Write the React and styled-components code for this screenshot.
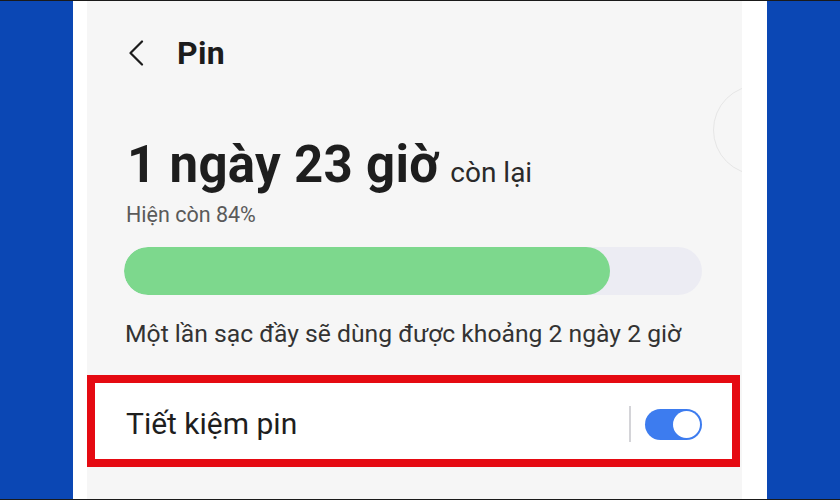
import styled, { createGlobalStyle } from 'styled-components';

const GlobalStyle = createGlobalStyle`
  * { box-sizing: border-box; }
  body {
    margin: 0;
    background: #ffffff;
    font-family: Roboto, "Noto Sans", Arial, sans-serif;
  }
`;

// Styles
const Page = styled.div`
  width: 840px;
  height: 500px;
  display: flex;
  border-top: 1px solid #1a1a1a;
  border-bottom: 1px solid #1a1a1a;
  overflow: hidden;
`;

const Side = styled.div`
  width: ${(p) => p.$width}px;
  flex-shrink: 0;
  background: #0b47b4;
`;

const Phone = styled.div`
  flex: 1;
  background: #ffffff;
  padding: 0 25px 0 14px;
  display: flex;
`;

const Screen = styled.div`
  position: relative;
  flex: 1;
  background: #f6f6f6;
  overflow: hidden;
`;

const EdgeRing = styled.div`
  position: absolute;
  left: 626px;
  top: 84px;
  width: 90px;
  height: 90px;
  border-radius: 50%;
  border: 1.5px solid #e6e6e6;
`;

const Header = styled.div`
  display: flex;
  align-items: center;
  gap: 33px;
  padding: 34px 0 0 41px;
  height: 70px;
  color: #1c1c1c;
`;

const Title = styled.h1`
  margin: 0;
  font-size: 32px;
  line-height: 36px;
  font-weight: 700;
  letter-spacing: 0.3px;
`;

const Content = styled.div`
  padding: 0 40px 0 37px;
`;

const Remaining = styled.div`
  display: flex;
  align-items: baseline;
  gap: 11px;
  margin: 66px 0 0 3px;
  color: #1e1e1e;
`;

const Hours = styled.span`
  font-size: 51px;
  line-height: 56px;
  font-weight: 700;
  letter-spacing: 0.3px;
`;

const Suffix = styled.span`
  font-size: 28px;
  font-weight: 400;
  color: #2a2a2a;
`;

const Caption = styled.p`
  margin: ${(p) => p.$margin};
  font-size: ${(p) => p.$size}px;
  line-height: ${(p) => p.$line}px;
  color: ${(p) => p.$color};
  padding-left: ${(p) => p.$indent || 0}px;
`;

const Track = styled.div`
  height: 48px;
  border-radius: 24px;
  background: #ececf3;
  overflow: hidden;
`;

const Fill = styled.div`
  height: 100%;
  border-radius: 24px;
  background: #7dd88d;
`;

const Highlight = styled.div`
  margin: 26px 2px 0 0;
  height: 92px;
  border: 8px solid #e50a12;
  background: #ffffff;
  display: flex;
  align-items: center;
  padding: 6px 30px 0 31px;
`;

const Label = styled.span`
  flex: 1;
  font-size: 30px;
  line-height: 34px;
  color: #1e1e1e;
`;

const Divider = styled.div`
  width: 2px;
  height: 36px;
  background: #d4d4d8;
  margin-right: 14px;
`;

const Switch = styled.div`
  width: 57px;
  height: 31px;
  border-radius: 16px;
  background: #3d7cef;
  padding: 2px;
  display: flex;
  justify-content: ${(p) => (p.$on ? 'flex-end' : 'flex-start')};
`;

const Knob = styled.div`
  width: 27px;
  height: 27px;
  border-radius: 50%;
  background: #ffffff;
`;

const BackIcon = () => (
  <svg width='16' height='26' viewBox='0 0 16 26' fill='none'>
    <path
      d='M14 1.5L2.5 13L14 24.5'
      stroke='#1c1c1c'
      strokeWidth='2.2'
      strokeLinecap='round'
      strokeLinejoin='round'
    />
  </svg>
);

const App = () => {
  const level = 84;
  return (
    <>
      <GlobalStyle />
      <Page>
        <Side $width={73} />
        <Phone>
          <Screen>
            <EdgeRing />
            <Header>
              <BackIcon />
              <Title>Pin</Title>
            </Header>

            <Content>
              <Remaining>
                <Hours>1 ngày 23 giờ</Hours>
                <Suffix>còn lại</Suffix>
              </Remaining>
              <Caption
                $margin='10px 0 0'
                $size={21.5}
                $line={24}
                $color='#5a5a5a'
                $indent={2}
              >
                Hiện còn {level}%
              </Caption>

              <Track style={{ marginTop: 20 }}>
                <Fill style={{ width: `${level}%` }} />
              </Track>

              <Caption
                $margin='24px 0 0'
                $size={24.7}
                $line={30}
                $color='#333333'
                $indent={1}
              >
                Một lần sạc đầy sẽ dùng được khoảng 2 ngày 2 giờ
              </Caption>
            </Content>

            <Highlight>
              <Label>Tiết kiệm pin</Label>
              <Divider />
              <Switch $on>
                <Knob />
              </Switch>
            </Highlight>
          </Screen>
        </Phone>
        <Side $width={73} />
      </Page>
    </>
  );
};

export default App;
